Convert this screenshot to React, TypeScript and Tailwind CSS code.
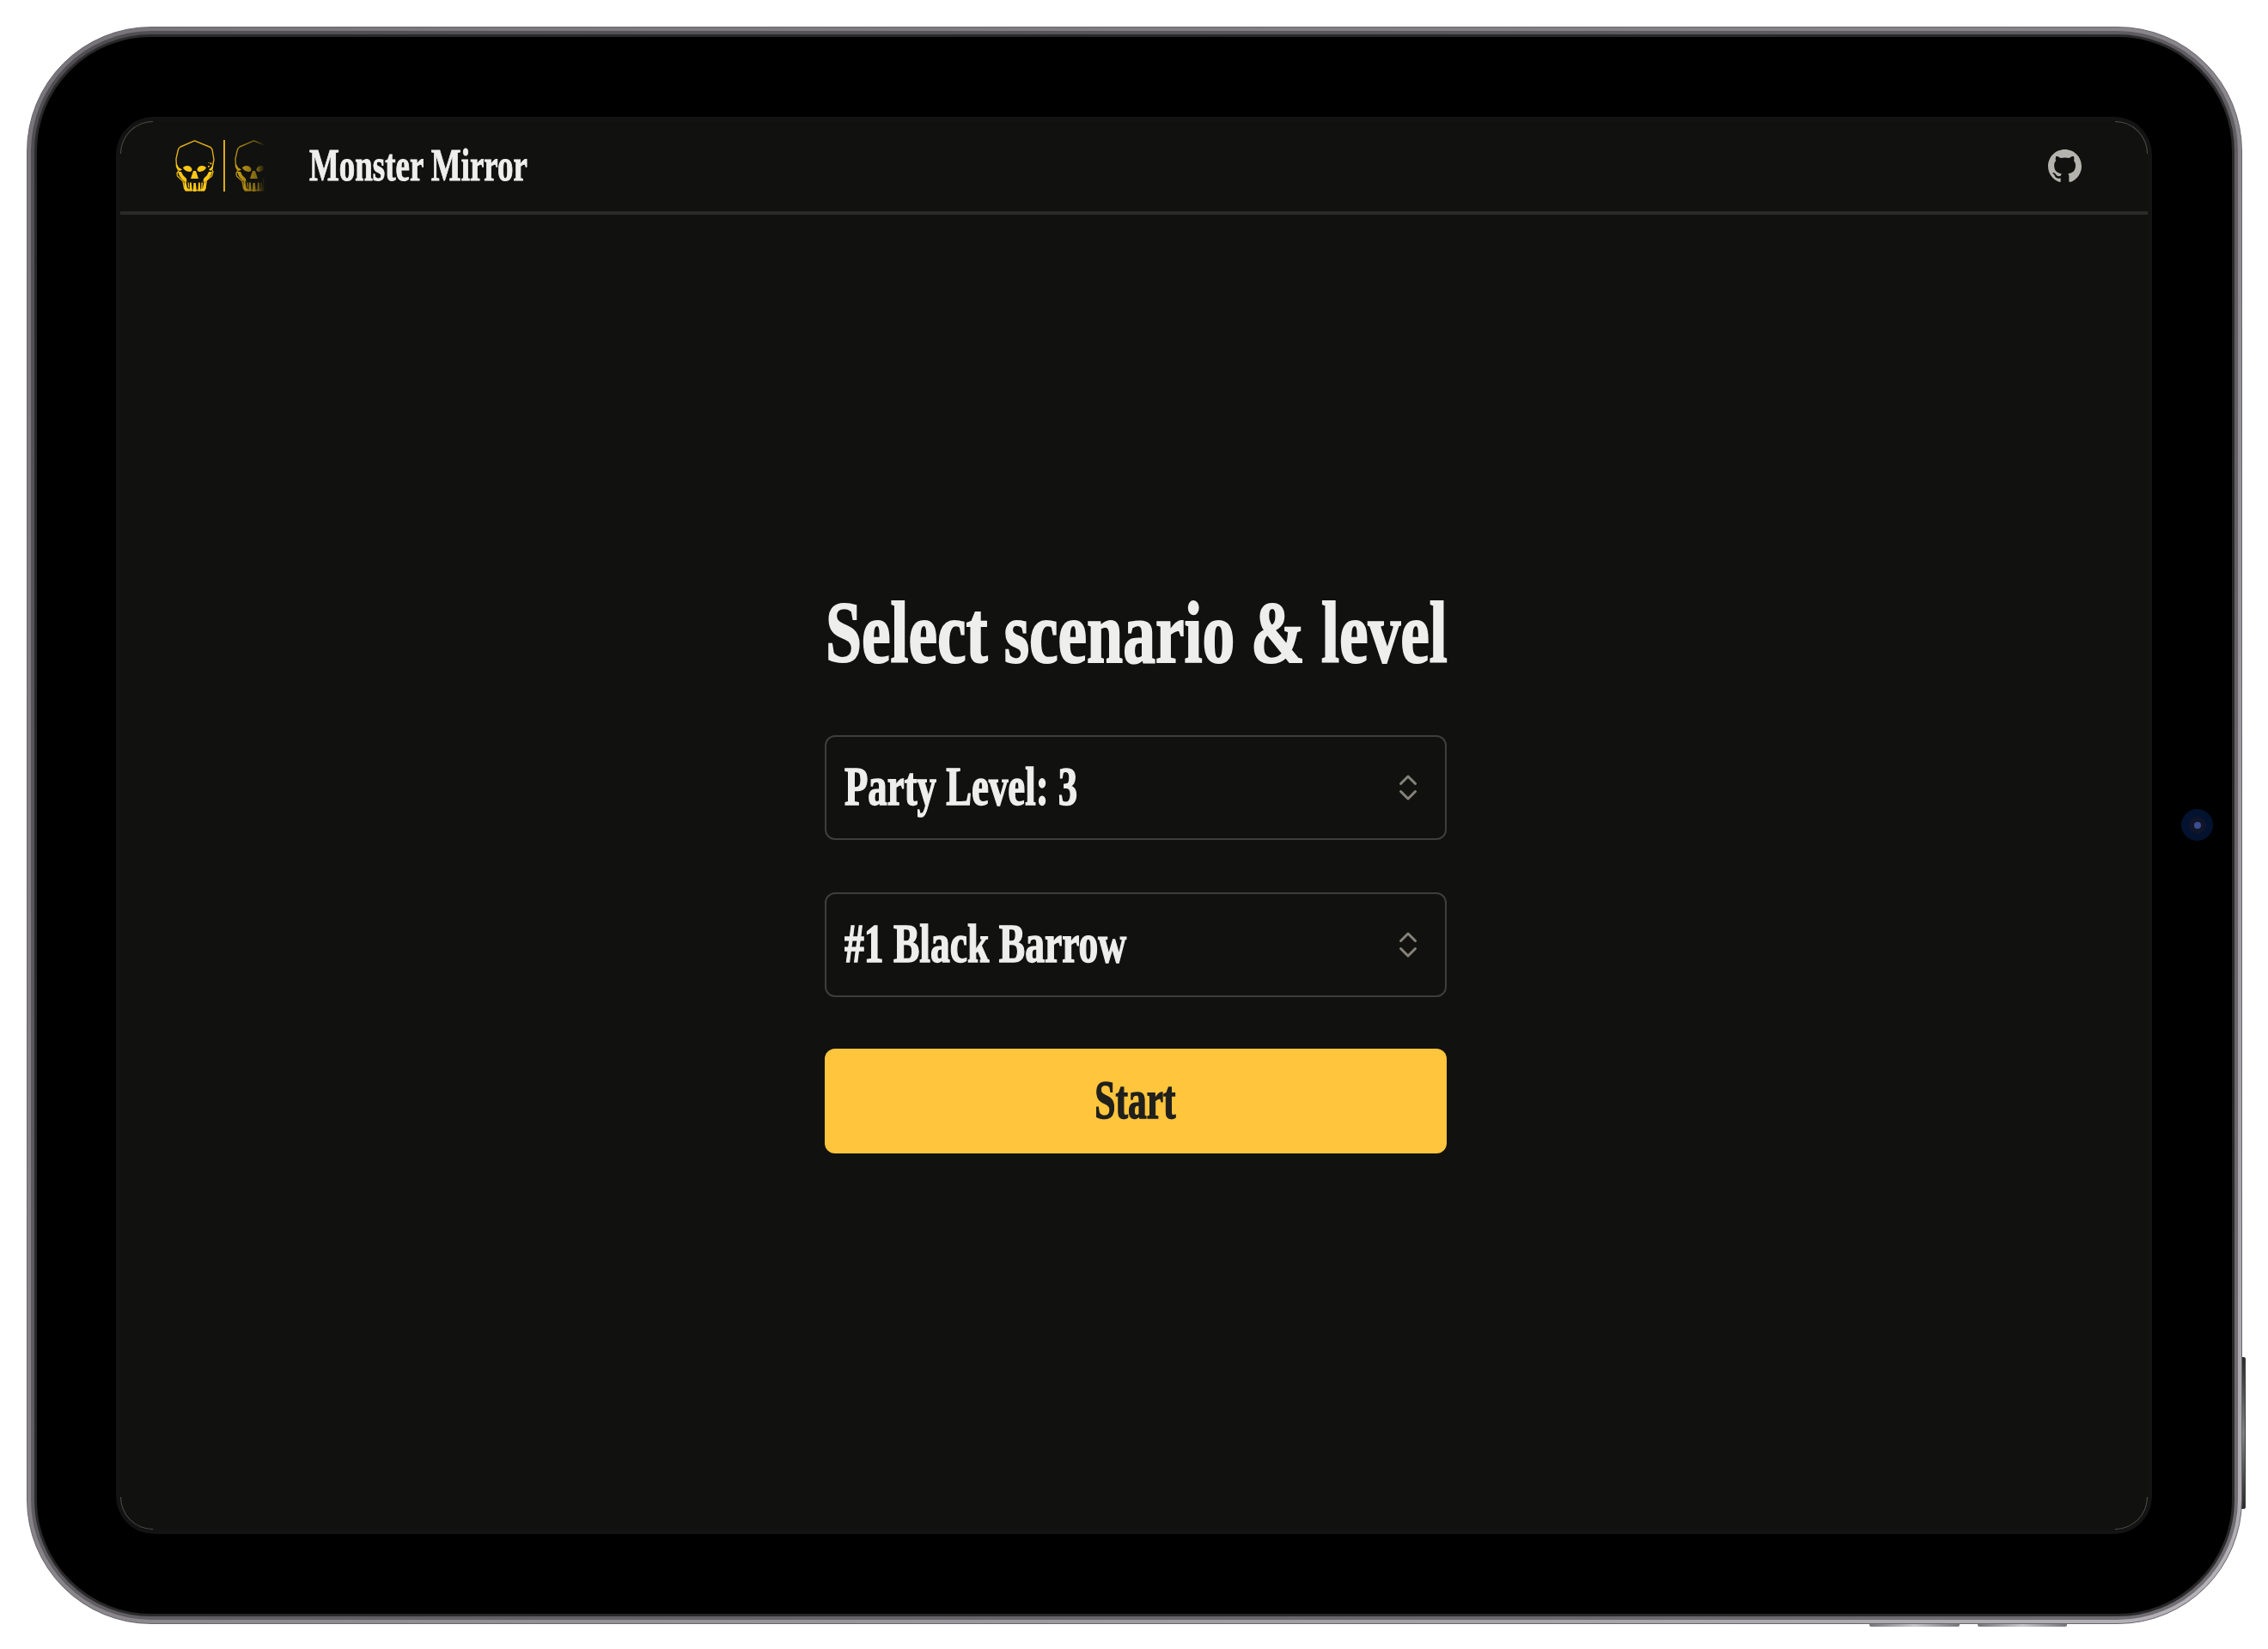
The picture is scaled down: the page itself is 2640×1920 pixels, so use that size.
import type { ReactNode } from "react";

function Skull() {
  return (
    <svg viewBox="0 0 46 60" className="h-[60px] w-[46px] shrink-0" fill="none">
      <path
        d="M22.500 .8 6 8 Q3.500 9.500 3 13 L1 22 1.500 31 4 36 2 38.500 2.500 42 9 48 10.500 56 12 58.500 H33.500 L35 56 36.500 47 42.500 42 44 37 42.500 34 45 23 43 11 41 8.500 Z"
        stroke="#e2ae17"
        strokeWidth="1.400"
        strokeLinejoin="round"
      />
      <g fill="#ffc816">
        <path d="M9 32.500 Q10 30 14 30 Q18 30 19.500 34 Q19.500 37 16.500 37 Q11.500 36.500 9 32.500 Z" />
        <path d="M36 32.500 Q35 30 31 30 Q27 30 25.500 34 Q25.500 37 28.500 37 Q33.500 36.500 36 32.500 Z" />
        <path d="M21 36 H24 L27 45 H18 Z" />
        <path d="M1 26 4 32 8 34.500 5.500 36 2 33 Z M3 37 7 37 9 41 13 45 13.500 49 9 47 5 42 Z" />
        <path d="M44.500 25 43 31 39 34.500 41 36 44 33 Z M43 37 39 37 37 41 33 45 32.500 49 37 47 41 42 Z" />
        <path d="M10.500 47 12.500 49 14 56 16.500 57 V59.500 H12 L10.500 57 Z M35.500 47 33.500 49 32 56 29.500 57 V59.500 H34 L35.500 57 Z" />
        <path d="M17 49.500h1.700l.8 7v3h-3zM21.500 50h2.300l.7 6v4h-3.500v-4zM27 49.500h1.700l.6 7v3h-2.800zM30.500 49.500h1.500l-.5 7h-1.300zM14.500 49.500h1.200l.3 6h-1z" />
        <path d="M38 30h1.800v1.500H38zM40.500 26.500h1.800v1.800h-1.800zM38.500 26h1v1h-1z" />
      </g>
    </svg>
  );
}

function Logo() {
  return (
    <div className="flex h-[60px] w-[104px] items-center overflow-hidden">
      <Skull />
      <div className="ml-[9.500px] h-[60px] w-[2.500px] shrink-0 bg-[#dca919]" />
      <div className="ml-[10.500px] w-[35px] overflow-hidden [mask-image:linear-gradient(to_right,rgba(0,0,0,.8),rgba(0,0,0,.45)_75%,transparent)]">
        <Skull />
      </div>
    </div>
  );
}

function Selector({ children }: { children: ReactNode }) {
  return (
    <button className="mb-[60.500px] flex h-[122px] w-full items-center justify-between rounded-xl border-2 border-[#3e3e3b] pr-[32px] pl-[21px]">
      {children}
      <svg viewBox="0 0 22 32" className="h-[32px] w-[22px]" fill="none" stroke="#858279" strokeWidth="3" strokeLinecap="round" strokeLinejoin="round">
        <path d="M2.500 11.500 11 3l8.500 8.500M2.500 20.500 11 29l8.500-8.500" />
      </svg>
    </button>
  );
}

export default function App() {
  return (
    <div className="relative h-[1920px] w-[2640px] overflow-hidden bg-white pt-[31px] pl-[31px] font-['Liberation_Serif',serif] font-bold text-[#eeeeec]">
      <div className="absolute top-[1580px] left-[2608px] h-[177px] w-[6px] rounded-r-[2px] border border-[#3b3e3d] bg-linear-to-b from-[#2a2c2b] via-[#7d8280] to-[#2a2c2b]" />
      <div className="absolute top-[1889px] left-[2176px] h-[5px] w-[105px] rounded-b-[2px] bg-linear-to-r from-[#77767a] via-[#c8c8ce] to-[#77767a]" />
      <div className="absolute top-[1889px] left-[2302px] h-[5px] w-[104px] rounded-b-[2px] bg-linear-to-r from-[#77767a] via-[#c8c8ce] to-[#77767a]" />
      <div className="relative h-[1860px] w-[2579px] rounded-[145px] border border-[#69676b] bg-linear-to-br from-[#77757a] via-[#88858b] to-[#b5b1b8] p-[4px]">
        <div className="h-full w-full rounded-[140px] bg-linear-to-br from-[#4f4d51] to-[#706e73] p-[4px]">
          <div className="h-full w-full rounded-[136px] border-[3px] border-[#29292a] bg-black pt-[93px] pl-[92px]">
            <div className="relative h-[1650px] w-[2370px] rounded-[44px] bg-[#131313] p-[5px]">
              <div className="pointer-events-none absolute top-[5px] left-[5px] size-[38px] rounded-tl-[38px] border-t border-l border-[#50504e]" />
              <div className="pointer-events-none absolute top-[5px] right-[5px] size-[38px] rounded-tr-[38px] border-t border-r border-[#50504e]" />
              <div className="pointer-events-none absolute bottom-[5px] left-[5px] size-[38px] rounded-bl-[38px] border-b border-l border-[#50504e]" />
              <div className="pointer-events-none absolute right-[5px] bottom-[5px] size-[38px] rounded-br-[38px] border-r border-b border-[#50504e]" />
              <div className="flex h-full w-full flex-col overflow-hidden rounded-[40px] bg-[#11120f]">
                <header className="flex h-[109px] items-center border-b-4 border-[#2a2a28] pr-[77px] pb-px pl-[64px]">
                  <Logo />
                  <h2 className="ml-[52px] w-[260px] text-[52px] leading-none whitespace-nowrap [-webkit-text-stroke:1px_currentColor]">
                    <span className="inline-block origin-left scale-x-[.71]">Monster Mirror</span>
                  </h2>
                  <svg viewBox="0 0 16 16" className="ml-auto h-[39px] w-[39px]" fill="#b5b3ad">
                    <path d="M8 0C3.580 0 0 3.580 0 8c0 3.540 2.290 6.530 5.470 7.590.4.070.55-.17.55-.38 0-.19-.01-.82-.01-1.490-2.010.37-2.530-.49-2.690-.94-.09-.23-.48-.94-.82-1.130-.28-.15-.68-.52-.01-.53.63-.01 1.080.58 1.230.82.72 1.210 1.870.87 2.330.66.070-.52.28-.87.51-1.070-1.780-.2-3.640-.89-3.640-3.950 0-.87.31-1.590.82-2.150-.08-.2-.36-1.020.08-2.120 0 0 .67-.21 2.200.82.64-.18 1.320-.27 2-.27s1.360.09 2 .27c1.530-1.040 2.200-.82 2.200-.82.44 1.100.16 1.920.08 2.120.51.56.82 1.270.82 2.150 0 3.070-1.870 3.750-3.650 3.950.29.25.54.73.54 1.480 0 1.070-.01 1.930-.01 2.200 0 .21.150.46.55.38A8 8 0 0 0 16 8c0-4.420-3.580-8-8-8Z" />
                  </svg>
                </header>
                <main className="ml-[819.500px] w-[724.500px]">
                  <h1 className="mt-[437px] mb-[69px] ml-px h-[100px] text-[101px] leading-none whitespace-nowrap [-webkit-text-stroke:2px_currentColor]">
                    <span className="inline-block origin-left scale-x-[.748]">Select scenario &amp; level</span>
                  </h1>
                  <Selector>
                    <span className="mb-[2px] inline-block h-[72px] w-[300px] origin-left scale-x-[.7] text-left text-[64px] leading-[72px] whitespace-nowrap [-webkit-text-stroke:1.500px_currentColor]">Party Level: 3</span>
                  </Selector>
                  <Selector>
                    <span className="mb-[2px] inline-block h-[72px] w-[300px] origin-left scale-x-[.712] text-left text-[64px] leading-[72px] whitespace-nowrap [-webkit-text-stroke:1.500px_currentColor]">#1 Black Barrow</span>
                  </Selector>
                  <button className="flex h-[122px] w-full items-center justify-center rounded-xl bg-[#ffc53d] pb-[2px] text-[64px] leading-none text-[#20201c] [-webkit-text-stroke:1.500px_currentColor]">
                    <span className="inline-block scale-x-[.68]">Start</span>
                  </button>
                </main>
              </div>
            </div>
          </div>
        </div>
        <div className="absolute top-[910px] left-[2507px] flex size-[37px] items-center justify-center rounded-full bg-[#03132f]">
          <div className="flex size-[20px] items-center justify-center rounded-full bg-[#11152a]">
            <div className="size-[8px] rounded-full bg-[#3c4d91]" />
          </div>
        </div>
      </div>
    </div>
  );
}
